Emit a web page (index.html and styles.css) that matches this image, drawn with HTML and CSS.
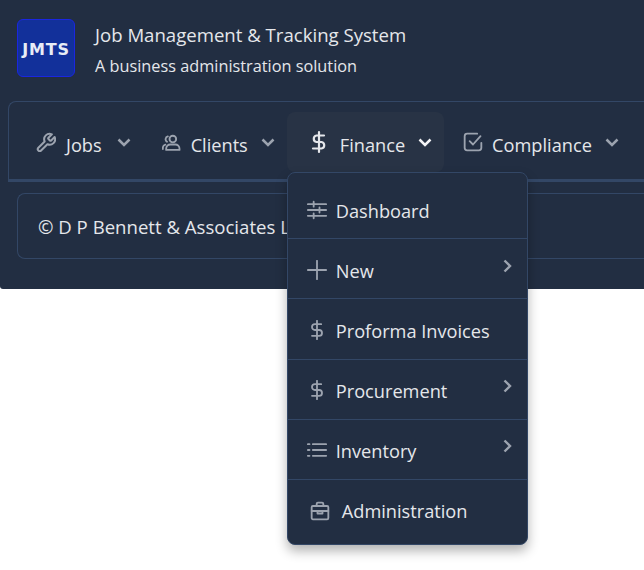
FILE: index.html
```html
<!DOCTYPE html>
<html lang="en">
<head>
  <meta charset="UTF-8">
  <meta name="viewport" content="width=device-width, initial-scale=1.0">
  <title>Job Management &amp; Tracking System</title>
  <link rel="stylesheet" href="styles.css">
</head>
<body>
  <div class="panel">
    <header class="brand">
      <div class="logo">JMTS</div>
      <div class="brand-text">
        <div class="brand-title">Job Management &amp; Tracking System</div>
        <div class="brand-sub">A business administration solution</div>
      </div>
    </header>

    <nav class="tabs">
      <a class="tab tab-jobs">
        <svg class="icon" viewBox="1 0 22 22"><path d="M14.7 6.3a1 1 0 0 0 0 1.4l1.6 1.6a1 1 0 0 0 1.4 0l3.77-3.77a6 6 0 0 1-7.94 7.94l-6.91 6.91a2.12 2.12 0 0 1-3-3l6.91-6.91a6 6 0 0 1 7.94-7.94l-3.76 3.76z"/></svg>
        <span>Jobs</span>
        <svg class="chev" viewBox="0 0 14 9"><path d="M1.5 1.5 7 7l5.500-5.500"/></svg>
      </a>
      <a class="tab">
        <svg class="icon" viewBox="0 -1.500 24 24"><circle cx="13" cy="7" r="4"/><path d="M5 20v-1.500a5 5 0 0 1 5-5h6a5 5 0 0 1 5 5V20z"/><path d="M1 19v-1.500a4 4 0 0 1 3-3.800M7 3.800a3.500 3.500 0 0 0-1 6.400"/></svg>
        <span>Clients</span>
        <svg class="chev" viewBox="0 0 14 9"><path d="M1.5 1.5 7 7l5.500-5.500"/></svg>
      </a>
      <a class="tab tab-open">
        <svg class="icon icon-wide" viewBox="0 0 24 24"><path d="M12 2v20M17 5.500H9.500a3.300 3.300 0 0 0 0 6.500h5a3.300 3.300 0 0 1 0 6.500H6"/></svg>
        <span>Finance</span>
        <svg class="chev" viewBox="0 0 14 9"><path d="M1.5 1.5 7 7l5.500-5.500"/></svg>

        <div class="menu">
          <div class="menu-item">
            <svg class="icon" viewBox="0 0 24 24"><path d="M1 5h22M1 12h22M1 19h22M8 2v6M15 9v6M8 16v6"/></svg>
            <span>Dashboard</span>
          </div>
          <div class="menu-item">
            <svg class="icon" viewBox="0 0 24 24"><path d="M12 1v22M1 12h22"/></svg>
            <span>New</span>
            <svg class="sub-arrow" viewBox="0 0 9 14"><path d="M1.500 1.500 7 7l-5.500 5.500"/></svg>
          </div>
          <div class="menu-item">
            <svg class="icon" viewBox="0 0 24 24"><path d="M12 1v22M17 5H9.500a3.500 3.500 0 0 0 0 7h5a3.500 3.500 0 0 1 0 7H6"/></svg>
            <span>Proforma Invoices</span>
          </div>
          <div class="menu-item">
            <svg class="icon" viewBox="0 0 24 24"><path d="M12 1v22M17 5H9.500a3.500 3.500 0 0 0 0 7h5a3.500 3.500 0 0 1 0 7H6"/></svg>
            <span>Procurement</span>
            <svg class="sub-arrow" viewBox="0 0 9 14"><path d="M1.500 1.500 7 7l-5.500 5.500"/></svg>
          </div>
          <div class="menu-item">
            <svg class="icon" viewBox="0 0 24 24"><path d="M7 5h16M7 12h16M7 19h16M1 5h2M1 12h2M1 19h2"/></svg>
            <span>Inventory</span>
            <svg class="sub-arrow" viewBox="0 0 9 14"><path d="M1.500 1.500 7 7l-5.500 5.500"/></svg>
          </div>
          <div class="menu-item menu-item-admin">
            <svg class="icon" viewBox="0 0 24 24"><rect x="2" y="6" width="20" height="16" rx="1.500"/><path d="M8 6V3.500A1.500 1.500 0 0 1 9.500 2h5A1.500 1.500 0 0 1 16 3.500V6M2 12h20M9 12v3h6v-3"/></svg>
            <span>Administration</span>
          </div>
        </div>
      </a>
      <a class="tab">
        <svg class="icon" viewBox="0 0 24 24"><path d="M8 11l4 4L21 5"/><path d="M22 13v6a3 3 0 0 1-3 3H5a3 3 0 0 1-3-3V5a3 3 0 0 1 3-3h12"/></svg>
        <span>Compliance</span>
        <svg class="chev" viewBox="0 0 14 9"><path d="M1.5 1.5 7 7l5.500-5.500"/></svg>
      </a>
    </nav>

    <footer class="copy">© D P Bennett &amp; Associates Limited</footer>
  </div>
</body>
</html>
```

FILE: styles.css
```css
html, body {
  margin: 0;
  background: #fff;
}
body {
  min-height: 570px;
  font-family: "Open Sans", "Noto Sans", Arial, sans-serif;
  font-size: 18.2px;
  color: #e5e7eb;
}
.panel {
  height: 289px;
  box-sizing: border-box;
  background: #222e42;
  border-radius: 0 0 0 3px;
  padding-top: 19px;
}
.brand {
  display: flex;
  gap: 20px;
  padding-left: 17px;
  height: 82px;
}
.logo {
  width: 58px;
  height: 58px;
  box-sizing: border-box;
  background: #12309a;
  border: 1px solid #1a26e0;
  border-radius: 6px;
  color: #e8ecf6;
  font-family: "DejaVu Sans", sans-serif;
  font-size: 16px;
  font-weight: bold;
  letter-spacing: 0.8px;
  line-height: 59px;
  text-align: center;
}
.brand-title {
  font-size: 18.6px;
  line-height: 24px;
  margin-top: 4px;
}
.brand-sub {
  font-size: 16.3px;
  line-height: 24px;
  margin-top: 7px;
}
.tabs {
  display: flex;
  height: 81px;
  box-sizing: border-box;
  margin-left: 8px;
  padding: 10px 0 0 8px;
  border: 1px solid #334766;
  border-right: 0;
  border-bottom-width: 3px;
  border-radius: 8px 0 0 0;
}
.tab {
  position: relative;
  display: flex;
  align-items: center;
  height: 60px;
  padding: 0 12px 0 19px;
  border-radius: 8px;
  line-height: 24px;
}
.tab > span {
  margin: 5px 13px 0 9px;
}
.tab-jobs > span {
  margin-left: 10px;
  margin-right: 15px;
}
.tab-open {
  padding-left: 20px;
  background: #283345;
}
.icon {
  width: 20px;
  height: 20px;
  fill: none;
  stroke: #9ca3af;
  stroke-width: 2.200;
  stroke-linecap: round;
  stroke-linejoin: round;
  flex: none;
}
.icon-wide {
  width: 24px;
  height: 24px;
  stroke: #e5e7eb;
}
.chev {
  width: 14px;
  height: 9px;
  margin-top: 1px;
  fill: none;
  stroke: #9ca3af;
  stroke-width: 2.500;
}
.tab-open .chev {
  stroke: #f3f4f6;
}
.menu {
  position: absolute;
  top: 60px;
  left: 0;
  width: 241px;
  height: 373px;
  box-sizing: border-box;
  padding-top: 6px;
  background: #222e42;
  border: 1px solid #334766;
  border-radius: 8px;
  box-shadow: 0 6px 12px rgba(0, 0, 0, 0.3);
  z-index: 2;
}
.menu-item {
  display: flex;
  align-items: center;
  height: 60.2px;
  box-sizing: border-box;
  padding: 2px 15px 0 19px;
  border-bottom: 1px solid #334766;
}
.menu-item > span {
  margin: 2px 0 0 9px;
}
.menu-item:last-child {
  border-bottom: 0;
}
.menu-item-admin {
  padding-left: 22px;
}
.menu-item-admin > span {
  margin: 0 0 0 12px;
}
.sub-arrow {
  width: 9px;
  height: 14px;
  margin: 0 0 8px auto;
  fill: none;
  stroke: #9ca3af;
  stroke-width: 2.400;
}
.copy {
  margin: 11px 0 0 17px;
  height: 66px;
  box-sizing: border-box;
  padding: 21px 20px;
  border: 1px solid #334766;
  border-right: 0;
  border-radius: 8px 0 0 8px;
  font-size: 18.6px;
  line-height: 24px;
}
```
